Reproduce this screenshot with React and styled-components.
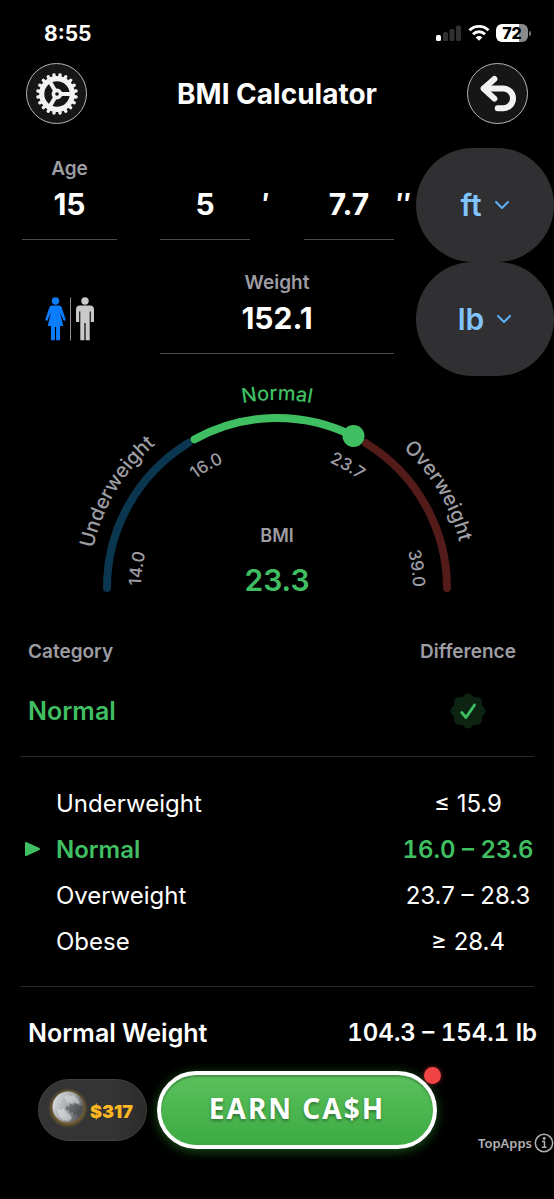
import React, { useState } from 'react'
import styled, { createGlobalStyle } from 'styled-components'

const GREEN = '#40bf62'
const GRAY = '#9d9da3'

const GlobalStyle = createGlobalStyle`
  * {
    box-sizing: border-box;
  }
  body {
    margin: 0;
    background: #000;
    color: #fff;
    font-family: Inter, Roboto, "Liberation Sans", sans-serif;
  }
  button, input, select {
    font-family: inherit;
    color: inherit;
  }
`

const Screen = styled.div`
  min-height: 100vh;
  display: flex;
  flex-direction: column;
  overflow: hidden;
`

const StatusBar = styled.div`
  display: flex;
  align-items: flex-end;
  justify-content: space-between;
  height: 48px;
  padding: 0 23px 0 44px;
`

const Clock = styled.span`
  font-size: 21px;
  line-height: 28px;
  font-weight: 700;
`

const StatusIcons = styled.div`
  display: flex;
  align-items: center;
  gap: 6px;
  height: 30px;
`

const Battery = styled.div`
  display: flex;
  align-items: center;
  gap: 1px;
  &::after {
    content: '';
    width: 2px;
    height: 5px;
    border-radius: 0 2px 2px 0;
    background: #77777a;
  }
`

const BatteryLevel = styled.span`
  width: 32px;
  height: 18px;
  border-radius: 6px;
  background: linear-gradient(90deg, #fff 72%, #8a8a8d 72%);
  color: #000;
  font-size: 16px;
  line-height: 18px;
  font-weight: 800;
  text-align: center;
`

const Header = styled.header`
  display: flex;
  align-items: center;
  justify-content: space-between;
  padding: 15px 26px 24px;
`

const Title = styled.h1`
  margin: 0;
  font-size: 28px;
  line-height: 32px;
  font-weight: 700;
`

const RoundButton = styled.button`
  width: 61px;
  height: 61px;
  padding: 0;
  display: flex;
  align-items: center;
  justify-content: center;
  border: 1px solid #b4b4b4;
  border-radius: 50%;
  background: #161616;
  cursor: pointer;
`

const FormRow = styled.div`
  display: flex;
  height: 114px;
  padding-left: 22px;
`

const SideCell = styled.div`
  width: 95px;
  margin-right: 43px;
  display: flex;
  flex-direction: column;
`

const Measures = styled.div`
  flex: 1;
  min-width: 0;
  display: grid;
  grid-template-columns: ${props => props.$split ? '1fr 54px 1fr 22px' : '1fr 22px'};
`

const Field = styled.label`
  display: flex;
  flex-direction: column;
  min-width: 0;
  padding-top: 11px;
`

const FieldLabel = styled.span`
  height: 20px;
  font-size: 19px;
  line-height: 20px;
  font-weight: 600;
  color: ${GRAY};
  text-align: center;
`

const FieldInput = styled.input`
  width: 100%;
  height: 61px;
  padding: 0 0 10px;
  border: 0;
  border-bottom: 1px solid #48484a;
  border-radius: 0;
  background: transparent;
  font-size: 30px;
  font-weight: 700;
  text-align: center;
  outline: none;
`

const Mark = styled.span`
  padding: ${props => props.$double ? '40px 0 0 2px' : '40px 0 0 12px'};
  font-size: 28px;
  line-height: 32px;
  font-weight: 700;
`

const UnitPill = styled.label`
  width: 138px;
  display: flex;
  align-items: center;
  justify-content: center;
  gap: 12px;
  border-radius: 57px;
  background: #303032;
  color: #82c4fd;
`

const UnitSelect = styled.select`
  appearance: none;
  field-sizing: content;
  padding: 0;
  border: 0;
  background: transparent;
  font-size: 30px;
  line-height: 36px;
  font-weight: 600;
  outline: none;
`

const SexButton = styled.button`
  margin: auto;
  padding: 0;
  border: 0;
  background: none;
  display: flex;
  cursor: pointer;
`

const Gauge = styled.section`
  display: grid;
  justify-items: center;
  align-items: end;
`

const GaugeArc = styled.svg`
  grid-area: 1 / 1;
  width: 420px;
  height: 230px;
  overflow: visible;
  font-weight: 500;
`

const GaugeValue = styled.div`
  grid-area: 1 / 1;
  display: flex;
  flex-direction: column;
  align-items: center;
  gap: 14px;
  padding-bottom: 6px;
`

const GaugeTitle = styled.span`
  font-size: 18px;
  line-height: 20px;
  font-weight: 600;
  color: ${GRAY};
`

const GaugeNumber = styled.output`
  font-size: 30px;
  line-height: 40px;
  font-weight: 600;
  color: ${GREEN};
`

const Table = styled.table`
  width: calc(100% - 36px);
  margin: ${props => props.$summary ? '25px 0 5px 20px' : '23px 0 22px 20px'};
  border-collapse: collapse;
  table-layout: fixed;
`

const HeadCell = styled.th`
  width: ${props => props.$value ? '140px' : 'auto'};
  height: 40px;
  padding: ${props => props.$value ? '0' : '0 0 0 8px'};
  font-size: 19px;
  font-weight: 600;
  color: ${GRAY};
  text-align: ${props => props.$value ? 'center' : 'left'};
`

const NameCell = styled.td`
  height: ${props => props.$tall ? '80px' : '46px'};
  padding: 0 0 0 ${props => props.$tall ? '8px' : '4px'};
  font-size: ${props => props.$tall ? '25px' : '24px'};
  font-weight: ${props => props.$active ? 600 : 400};
  color: ${props => props.$active ? GREEN : '#fff'};
`

const RangeName = styled.span`
  display: flex;
  align-items: center;
`

const Marker = styled.span`
  width: 32px;
  display: flex;
`

const ValueCell = styled.td`
  width: 140px;
  padding: 0;
  font-size: 24px;
  font-weight: ${props => props.$active ? 600 : 400};
  font-variant-numeric: ${props => props.$active ? 'tabular-nums' : 'normal'};
  color: ${props => props.$active ? GREEN : '#fff'};
  text-align: center;
  white-space: nowrap;
  svg {
    display: block;
    margin: 0 auto;
  }
`

const Divider = styled.hr`
  width: calc(100% - 40px);
  height: 1px;
  margin: 0 20px;
  border: 0;
  background: #29292b;
`

const Summary = styled.div`
  display: flex;
  justify-content: space-between;
  padding: 30px 17px 22px 28px;
  font-size: 25px;
  line-height: 32px;
  font-weight: 600;
`

const SummaryValue = styled.span`
  font-size: 24px;
  font-variant-numeric: tabular-nums;
`

const Banner = styled.footer`
  display: flex;
  align-items: center;
  padding-left: 38px;
`

const CoinPill = styled.div`
  width: 109px;
  height: 62px;
  margin-right: 10px;
  display: flex;
  align-items: center;
  justify-content: center;
  gap: 4px;
  border: 1px solid #414141;
  border-radius: 31px;
  background: linear-gradient(90deg, #343434 70%, #2b2b2b);
`

const CoinAmount = styled.span`
  color: #ffb722;
  font-size: 18px;
  line-height: 24px;
  font-weight: 900;
  padding-top: 4px;
`

const EarnButton = styled.button`
  position: relative;
  width: 280px;
  height: 78px;
  padding: 0 0 4px;
  border: 4px solid #fff;
  border-radius: 39px;
  background: linear-gradient(180deg, #5cc25f, #3ba940);
  background-origin: border-box;
  box-shadow: 0 2px 12px rgba(50, 170, 50, 0.5), inset 0 2px 2px rgba(0, 0, 0, 0.25);
  color: #fff;
  font-family: "Noto Sans", "Open Sans", sans-serif;
  font-size: 28px;
  font-weight: 700;
  letter-spacing: 2px;
  text-shadow: 0 2px 3px rgba(0, 0, 0, 0.35);
  cursor: pointer;
`

const Badge = styled.span`
  position: absolute;
  top: -8px;
  right: -8px;
  width: 17px;
  height: 17px;
  border-radius: 50%;
  background: #f24444;
  box-shadow: 0 0 5px rgba(242, 68, 68, 0.5);
`

const Sponsor = styled.a`
  align-self: flex-end;
  margin-left: auto;
  margin-bottom: -4px;
  display: flex;
  align-items: center;
  gap: 2px;
  color: #b1b1b4;
  font-family: "Noto Sans", sans-serif;
  font-size: 13px;
  line-height: 20px;
  font-weight: 600;
  text-decoration: none;
`

const ranges = [
  { name: 'Underweight', value: '≤ 15.9' },
  { name: 'Normal', value: '16.0 – 23.6', active: true },
  { name: 'Overweight', value: '23.7 – 28.3' },
  { name: 'Obese', value: '≥ 28.4' },
]

// point on a circle around the gauge centre, angle in degrees from the left end
const polar = (r, deg) => {
  const a = (deg * Math.PI) / 180
  return `${(210 - r * Math.cos(a)).toFixed(2)} ${(212 - r * Math.sin(a)).toFixed(2)}`
}

const arc = (r, from, to) => `M${polar(r, from)} A${r} ${r} 0 0 1 ${polar(r, to)}`

const ArcText = ({ id, r, at, size, color = GRAY, children }) => (
  <>
    <path id={id} d={arc(r, at - 60, at + 60)} fill="none" />
    <text fontSize={size} fill={color} textAnchor="middle">
      <textPath href={`#${id}`} startOffset="50%">{children}</textPath>
    </text>
  </>
)

const GearIcon = () => {
  const teeth = Array.from({ length: 20 }, (_, i) => i * 18 + 9)
  return (
    <svg width="44" height="44" viewBox="-22 -22 44 44" fill="none" stroke="#f2f2f2">
      <circle r="15.3" strokeWidth="5.2" />
      {teeth.map(deg => (
        <path key={deg} d="M0 -17V-19.3" strokeWidth="3.4" strokeLinecap="round" transform={`rotate(${deg})`} />
      ))}
      <circle r="3.6" strokeWidth="3.6" />
      {[90, 210, 330].map(deg => (
        <path key={deg} d="M0 -4V-15" strokeWidth="4" transform={`rotate(${deg})`} />
      ))}
    </svg>
  )
}

const BackIcon = () => (
  <svg width="40" height="40" viewBox="0 0 40 40" fill="none" stroke="#f2f2f2" strokeWidth="6" strokeLinecap="round" strokeLinejoin="round">
    <path d="M16.4 5L5.6 14.6L16.4 24.6" />
    <path d="M6 14.6H25.2A9.8 9.8 0 0 1 25.2 34.2H19.7" />
  </svg>
)

const Signal = () => (
  <svg width="26" height="18" viewBox="0 0 26 18">
    <rect x="0" y="11" width="5" height="6" rx="1.5" fill="#fff" />
    <rect x="7" y="8" width="5" height="9" rx="1.5" fill="#303032" />
    <rect x="13.5" y="5" width="5" height="12" rx="1.5" fill="#303032" />
    <rect x="20" y="1.5" width="5" height="15.5" rx="1.5" fill="#303032" />
  </svg>
)

const Wifi = () => (
  <svg width="22" height="18" viewBox="0 0 22 18" fill="none" stroke="#fff" strokeWidth="2.9">
    <path d="M1.5 6.3A13.5 13.5 0 0 1 20.5 6.3" />
    <path d="M5 10.2A8.6 8.6 0 0 1 17 10.2" />
    <path d="M11 16.8L7.7 13.4A4.7 4.7 0 0 1 14.3 13.4Z" fill="#fff" stroke="none" />
  </svg>
)

const Chevron = () => (
  <svg width="16" height="10" viewBox="0 0 16 10" fill="none" stroke="#5fb2f5" strokeWidth="2" strokeLinecap="round" strokeLinejoin="round">
    <path d="M2 2L8 8L14 2" />
  </svg>
)

const SexIcon = () => (
  <svg width="52" height="44" viewBox="0 0 52 44">
    <g fill="#0a7dff">
      <circle cx="11.5" cy="4" r="3.7" />
      <path d="M8 8.5H15Q17 8.5 17.6 10.2L21.6 22.2Q21.6 24 19.7 23.8L16 15.5L19.3 29H16V43.3H12.1V30H10.9V43.3H7V29H3.7L7 15.5L3.3 23.8Q1.4 24 1.4 22.2L5.4 10.2Q6 8.5 8 8.5Z" />
    </g>
    <path d="M26.5 0.5V43.5" stroke="#8e8e93" strokeWidth="1" />
    <g fill="#c9c9c9">
      <circle cx="41" cy="4" r="3.7" />
      <path d="M36 8.5H46Q50 8.5 50 12.5V25H46.8V14.5H45.7V43.3H41.6V26H40.4V43.3H36.3V14.5H35.2V25H32V12.5Q32 8.5 36 8.5Z" />
    </g>
  </svg>
)

const CheckBadge = () => {
  const bumps = Array.from({ length: 8 }, (_, i) => i * 45)
  return (
    <svg width="36" height="36" viewBox="-18 -18 36 36">
      <g fill="#0d2413">
        <circle r="15.3" />
        {bumps.map(deg => (
          <circle key={deg} cy="-12.8" r="4.8" transform={`rotate(${deg})`} />
        ))}
      </g>
      <path d="M-6.3 1.5L-2 6.5L6.5 -6" fill="none" stroke={GREEN} strokeWidth="2.8" strokeLinecap="round" strokeLinejoin="round" />
    </svg>
  )
}

const Coin = () => (
  <svg width="34" height="34" viewBox="0 0 34 34" overflow="visible">
    <defs>
      <radialGradient id="coinGlow">
        <stop offset="0.7" stopColor="#a8842c" stopOpacity="0.7" />
        <stop offset="1" stopColor="#a8842c" stopOpacity="0" />
      </radialGradient>
      <linearGradient id="coinFace" x1="0" y1="0.2" x2="1" y2="0.7">
        <stop offset="0" stopColor="#dcdfe3" />
        <stop offset="0.5" stopColor="#a3a6aa" />
        <stop offset="1" stopColor="#4b4c4f" />
      </linearGradient>
    </defs>
    <circle cx="16" cy="15" r="20" fill="url(#coinGlow)" />
    <circle cx="16" cy="14" r="15.5" fill="url(#coinFace)" />
    <path d="M12 4L15 2L19 3L22 2L26 6L28 10L25 11L22 9L20 11L17 9L15 11L14 7Z" fill="#e3e5e8" opacity="0.5" />
    <path d="M14 13L17 14L18 11L22 12L24 10L27 13L31 13L30 19L27 23L24 21L22 23L21 19L18 20L17 17L14 17Z" fill="#3d3f43" opacity="0.5" />
    <path d="M5 16L9 17L11 15L14 19L18 22L20 25L17 28L11 27L7 23Z" fill="#f0f1f3" opacity="0.5" />
  </svg>
)

const App = () => {
  const [age, setAge] = useState('15')
  const [feet, setFeet] = useState('5')
  const [inches, setInches] = useState('7.7')
  const [weight, setWeight] = useState('152.1')

  return (
    <>
      <GlobalStyle />
      <Screen>
        <StatusBar>
          <Clock>8:55</Clock>
          <StatusIcons>
            <Signal />
            <Wifi />
            <Battery><BatteryLevel>72</BatteryLevel></Battery>
          </StatusIcons>
        </StatusBar>

        <Header>
          <RoundButton aria-label="Settings"><GearIcon /></RoundButton>
          <Title>BMI Calculator</Title>
          <RoundButton aria-label="Back"><BackIcon /></RoundButton>
        </Header>

        <FormRow>
          <SideCell>
            <Field>
              <FieldLabel>Age</FieldLabel>
              <FieldInput value={age} onChange={e => setAge(e.target.value)} />
            </Field>
          </SideCell>
          <Measures $split>
            <Field>
              <FieldLabel />
              <FieldInput aria-label="Feet" value={feet} onChange={e => setFeet(e.target.value)} />
            </Field>
            <Mark>′</Mark>
            <Field>
              <FieldLabel />
              <FieldInput aria-label="Inches" value={inches} onChange={e => setInches(e.target.value)} />
            </Field>
            <Mark $double>″</Mark>
          </Measures>
          <UnitPill>
            <UnitSelect aria-label="Height unit" defaultValue="ft">
              <option>ft</option>
            </UnitSelect>
            <Chevron />
          </UnitPill>
        </FormRow>

        <FormRow>
          <SideCell>
            <SexButton aria-label="Sex"><SexIcon /></SexButton>
          </SideCell>
          <Measures>
            <Field>
              <FieldLabel>Weight</FieldLabel>
              <FieldInput value={weight} onChange={e => setWeight(e.target.value)} />
            </Field>
          </Measures>
          <UnitPill>
            <UnitSelect aria-label="Weight unit" defaultValue="lb">
              <option>lb</option>
            </UnitSelect>
            <Chevron />
          </UnitPill>
        </FormRow>

        <Gauge>
          <GaugeArc viewBox="0 0 420 230">
            <g fill="none" strokeWidth="8" strokeLinecap="round">
              <path d={arc(170, 0, 58.5)} stroke="#0b3650" />
              <path d={arc(170, 121.5, 180)} stroke="#531b19" />
              <path d={arc(170, 61, 117)} stroke={GREEN} />
            </g>
            <circle cx="286.5" cy="60" r="11" fill={GREEN} />
            <ArcText id="under" r={188} at={31} size={20}>Underweight</ArcText>
            <ArcText id="normal" r={188} at={90} size={20} color={GREEN}>Normal</ArcText>
            <ArcText id="over" r={188} at={149} size={20}>Overweight</ArcText>
            <ArcText id="t14" r={136} at={8} size={17}>14.0</ArcText>
            <ArcText id="t16" r={136} at={60} size={17}>16.0</ArcText>
            <ArcText id="t23" r={136} at={120} size={17}>23.7</ArcText>
            <ArcText id="t39" r={136} at={172} size={17}>39.0</ArcText>
          </GaugeArc>
          <GaugeValue>
            <GaugeTitle>BMI</GaugeTitle>
            <GaugeNumber>23.3</GaugeNumber>
          </GaugeValue>
        </Gauge>

        <Table $summary>
          <thead>
            <tr>
              <HeadCell>Category</HeadCell>
              <HeadCell $value>Difference</HeadCell>
            </tr>
          </thead>
          <tbody>
            <tr>
              <NameCell $tall $active>Normal</NameCell>
              <ValueCell><CheckBadge /></ValueCell>
            </tr>
          </tbody>
        </Table>
        <Divider />
        <Table>
          <colgroup>
            <col />
            <col width="140" />
          </colgroup>
          <tbody>
            {ranges.map(el => (
              <tr key={el.name}>
                <NameCell $active={el.active}>
                  <RangeName>
                    <Marker>
                      {el.active && (
                        <svg width="18" height="16" viewBox="0 0 18 16" fill={GREEN} stroke={GREEN} strokeWidth="2" strokeLinejoin="round">
                          <path d="M2 2V14L15 8Z" />
                        </svg>
                      )}
                    </Marker>
                    {el.name}
                  </RangeName>
                </NameCell>
                <ValueCell $active={el.active}>{el.value}</ValueCell>
              </tr>
            ))}
          </tbody>
        </Table>
        <Divider />
        <Summary>
          <span>Normal Weight</span>
          <SummaryValue>104.3 – 154.1 lb</SummaryValue>
        </Summary>

        <Banner>
          <CoinPill>
            <Coin />
            <CoinAmount>$317</CoinAmount>
          </CoinPill>
          <EarnButton>
            EARN CA$H
            <Badge />
          </EarnButton>
          <Sponsor href="#topapps">
            TopApps
            <svg width="20" height="20" viewBox="0 0 20 20" fill="none" stroke="#b1b1b4" strokeWidth="1.5">
              <circle cx="10" cy="10" r="8.7" />
              <path d="M8 8.5H10.5V14M7.8 14.2H12.5" />
              <circle cx="10.2" cy="5.5" r="0.7" fill="#b1b1b4" />
            </svg>
          </Sponsor>
        </Banner>
      </Screen>
    </>
  )
}

export default App
